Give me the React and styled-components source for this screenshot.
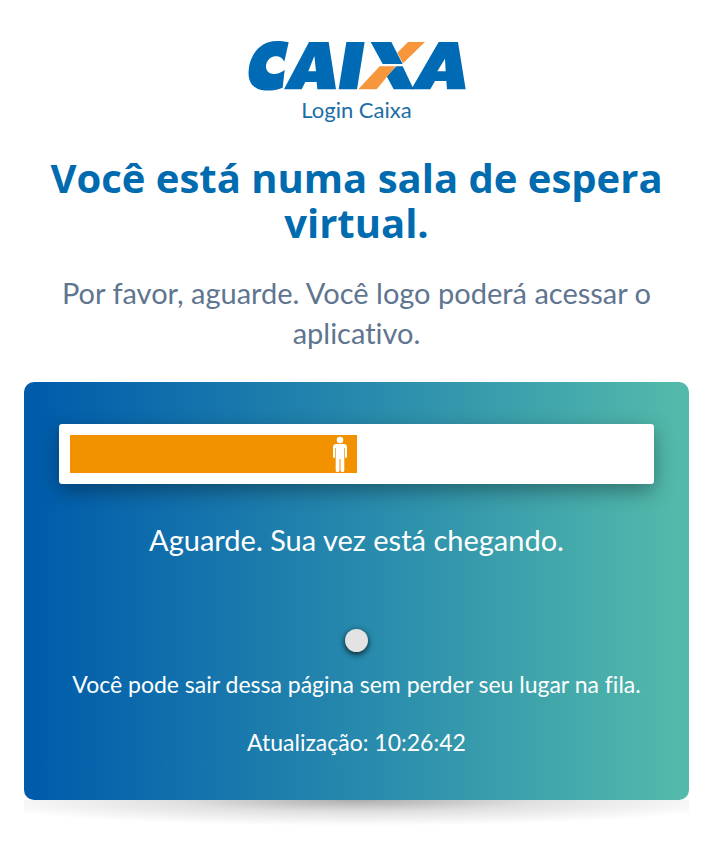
import React from "react";
import styled, { createGlobalStyle } from "styled-components";

const GlobalStyle = createGlobalStyle`
  *, *::before, *::after { box-sizing: border-box; }
  body {
    margin: 0;
    background: #fff;
    font-family: Lato, "Open Sans", sans-serif;
    font-variant-ligatures: none;
    color: #fff;
  }
`;

const Page = styled.main`
  padding: 41px 22px 24px 24px;
  text-align: center;
`;

const Brand = styled.header`
  display: flex;
  flex-direction: column;
  align-items: center;
`;

const Logo = styled.svg`
  width: 218px;
  height: 50px;
`;

const BrandName = styled.p`
  margin: 5px 0 0;
  font-size: 22px;
  line-height: 28px;
  color: #1b6ea5;
`;

const Title = styled.h1`
  margin: 31px 0 0;
  font-family: "Open Sans", Lato, sans-serif;
  font-size: 40px;
  font-weight: 700;
  line-height: 45px;
  color: #006bae;
`;

const Lead = styled.p`
  margin: 28px 0 0;
  font-size: 29px;
  line-height: 40px;
  color: #5f7590;
`;

const Card = styled.section`
  margin-top: 29px;
  padding: 42px 35px;
  border-radius: 10px;
  background: linear-gradient(90deg, #005cab 2%, #2a8dad 54%, #53b9aa 98%);
`;

const Track = styled.div`
  padding: 11px;
  border-radius: 3px;
  background: #fff;
  box-shadow: 0 7px 20px rgba(0, 0, 0, 0.35);
`;

const Fill = styled.div`
  display: flex;
  align-items: center;
  justify-content: flex-end;
  height: 38px;
  padding-right: 9px;
  background: #f39200;
`;

const Person = styled.svg`
  width: 16px;
  height: 36px;
`;

const Status = styled.p`
  margin: 36px 0 0;
  font-size: 29px;
  line-height: 40px;
`;

const Pulse = styled.div`
  width: 23px;
  height: 23px;
  margin: 69px auto 0;
  border-radius: 50%;
  background: #e3e3e3;
  box-shadow: 0 2px 6px rgba(0, 0, 0, 0.8);
`;

const Note = styled.p`
  margin: ${(p) => p.$gap}px 0 0;
  font-size: 23px;
  line-height: 32px;
`;

const Shadow = styled.div`
  height: 26px;
  background: radial-gradient(ellipse 60% 100% at 50% 0, rgba(0, 0, 0, 0.32), rgba(0, 0, 0, 0.12) 45%, transparent);
`;

const progress = 50;

function CaixaLogo() {
  return (
    <Logo viewBox="24 33 652 150" role="img" aria-label="Caixa">
      <g fill="#006bb4">
        <path d="M145 37 132 95C126 82 114 77 103 79 87 82 76 96 77 112 79 128 93 135 108 131 118 129 126 125 133 119L127 173C110 181 85 183 68 181 38 177 22 155 25 122 28 75 60 33 108 33 122 33 134 34 145 37Z" />
        <path fillRule="evenodd" d="M131 178 206 36H265L287 178H231L229 156H195L184 178ZM222 78 204 124H227Z" />
        <path d="M318 36H373L350 178H295Z" />
        <path d="M391 36H453L487 102H427Z" />
        <path d="M439 139 468 109H487L520 178H460Z" />
        <path fillRule="evenodd" d="M513 178 595 36H653L676 178H620L618 153H584L570 178ZM614 86 591 124H616Z" />
      </g>
      <path fill="#f7963a" d="M503 36H554L488 100 471 68ZM418 109H466L409 178H354Z" />
    </Logo>
  );
}

export default function App() {
  return (
    <>
      <GlobalStyle />
      <Page>
        <Brand>
          <CaixaLogo />
          <BrandName>Login Caixa</BrandName>
        </Brand>
        <Title>Você está numa sala de espera virtual.</Title>
        <Lead>Por favor, aguarde. Você logo poderá acessar o aplicativo.</Lead>
        <Card>
          <Track role="progressbar" aria-label="Posição na fila" aria-valuemin={0} aria-valuemax={100} aria-valuenow={progress}>
            <Fill style={{ width: `${progress}%` }}>
              <Person viewBox="0 0 16 36" fill="#fff" aria-hidden="true">
                <circle cx="8" cy="4" r="3.3" />
                <path d="M4 8H12Q15 8 15 11V21Q15 22 14 22T13 21V12H12.3V34.500Q12.300 36 10.500 36T8.500 34.500V23H7.500V34.500Q7.500 36 5.500 36T3.700 34.500V12H3V21Q3 22 2 22T1 21V11Q1 8 4 8Z" />
              </Person>
            </Fill>
          </Track>
          <Status>Aguarde. Sua vez está chegando.</Status>
          <Pulse />
          <Note $gap={16}>Você pode sair dessa página sem perder seu lugar na fila.</Note>
          <Note $gap={26}>Atualização: 10:26:42</Note>
        </Card>
        <Shadow />
      </Page>
    </>
  );
}
